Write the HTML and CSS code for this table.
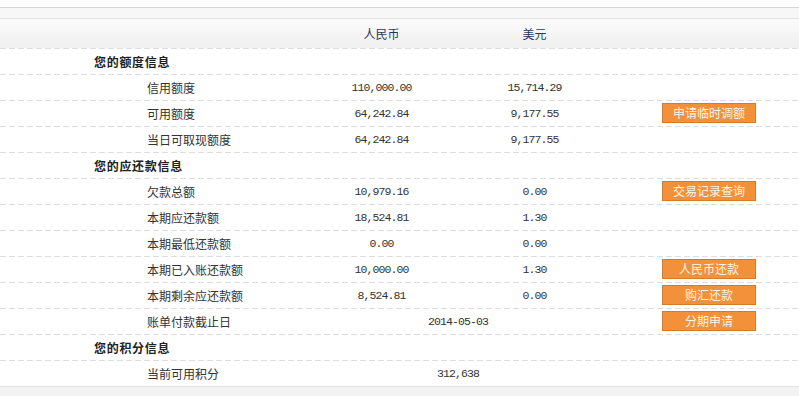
FILE: index.html
```html
<!DOCTYPE html>
<html lang="zh-CN">
<head>
<meta charset="utf-8">
<title>额度信息</title>
<link rel="stylesheet" href="styles.css">
</head>
<body>
<div class="page">
  <div class="topgap"></div>
  <div class="band"></div>
  <div class="grid head">
    <div></div>
    <div class="hcell">人民币</div>
    <div class="hcell">美元</div>
    <div></div>
  </div>

  <div class="grid row">
    <div class="sec">您的额度信息</div>
  </div>
  <div class="grid row">
    <div class="lbl">信用额度</div>
    <div class="num">110,000.00</div>
    <div class="num">15,714.29</div>
    <div></div>
  </div>
  <div class="grid row">
    <div class="lbl">可用额度</div>
    <div class="num">64,242.84</div>
    <div class="num">9,177.55</div>
    <div class="act"><span class="btn">申请临时调额</span></div>
  </div>
  <div class="grid row">
    <div class="lbl">当日可取现额度</div>
    <div class="num">64,242.84</div>
    <div class="num">9,177.55</div>
    <div></div>
  </div>

  <div class="grid row">
    <div class="sec">您的应还款信息</div>
  </div>
  <div class="grid row">
    <div class="lbl">欠款总额</div>
    <div class="num">10,979.16</div>
    <div class="num">0.00</div>
    <div class="act"><span class="btn">交易记录查询</span></div>
  </div>
  <div class="grid row">
    <div class="lbl">本期应还款额</div>
    <div class="num">18,524.81</div>
    <div class="num">1.30</div>
    <div></div>
  </div>
  <div class="grid row">
    <div class="lbl">本期最低还款额</div>
    <div class="num">0.00</div>
    <div class="num">0.00</div>
    <div></div>
  </div>
  <div class="grid row">
    <div class="lbl">本期已入账还款额</div>
    <div class="num">10,000.00</div>
    <div class="num">1.30</div>
    <div class="act"><span class="btn">人民币还款</span></div>
  </div>
  <div class="grid row">
    <div class="lbl">本期剩余应还款额</div>
    <div class="num">8,524.81</div>
    <div class="num">0.00</div>
    <div class="act"><span class="btn">购汇还款</span></div>
  </div>
  <div class="grid row">
    <div class="lbl">账单付款截止日</div>
    <div class="num span2">2014-05-03</div>
    <div class="act"><span class="btn">分期申请</span></div>
  </div>

  <div class="grid row">
    <div class="sec">您的积分信息</div>
  </div>
  <div class="grid row">
    <div class="lbl">当前可用积分</div>
    <div class="num span2">312,638</div>
    <div></div>
  </div>
  <div class="foot"></div>
</div>
</body>
</html>
```

FILE: styles.css
```css
html, body {
  margin: 0;
  padding: 0;
  background: #ffffff;
}
body {
  font-family: "Noto Sans CJK SC", "Noto Sans", sans-serif;
  font-size: 12px;
  color: #333333;
}
.page {
  width: 799px;
  height: 396px;
  overflow: hidden;
}
.topgap {
  height: 7px;
  background: #ffffff;
}
.band {
  height: 10px;
  border-top: 1px solid #d6d6d6;
  background: #f7f7f7;
}
.grid {
  display: grid;
  grid-template-columns: 305px 153px 153px 1fr;
  align-items: center;
}
.head {
  height: 29px;
  border-top: 1px solid #e3e3e3;
  background: linear-gradient(#fbfbfb, #efefef);
}
.hcell {
  text-align: center;
  color: #1f3b5c;
  line-height: 28px;
}
.row {
  height: 26px;
  box-sizing: border-box;
  padding-top: 1px;
  padding-bottom: 1px;
  background: repeating-linear-gradient(90deg, #dedede 0 6px, transparent 6px 9px) top left / 100% 1px no-repeat;
}
.sec {
  grid-column: 1 / 5;
  padding-left: 94px;
  font-weight: bold;
  color: #222222;
  letter-spacing: 0.7px;
}
.lbl {
  padding-left: 147px;
  color: #333333;
}
.num {
  text-align: center;
  font-family: "Liberation Mono", "DejaVu Sans Mono", monospace;
  font-size: 11.5px;
  letter-spacing: -0.9px;
  color: #333333;
}
.span2 {
  grid-column: span 2;
}
.act {
  padding-left: 51px;
  display: flex;
  align-items: center;
}
.btn {
  display: block;
  width: 94px;
  height: 20px;
  box-sizing: border-box;
  background: #f2913a;
  border: 1px solid #d47a28;
  color: #fff6e6;
  text-align: center;
  line-height: 18px;
  font-size: 12px;
}
.foot {
  height: 10px;
  border-top: 1px solid #e2e2e2;
  background: #f3f3f3;
}
```
